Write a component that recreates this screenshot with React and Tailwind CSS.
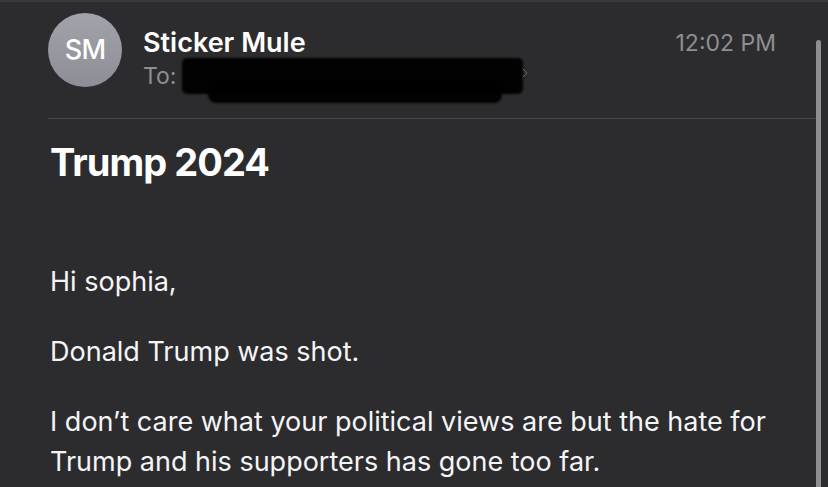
import { ChevronRight } from 'lucide-react'

const font = { fontFamily: 'Inter, "Noto Sans", sans-serif' }

function Redaction() {
  return (
    <div className="absolute left-[39px] top-[-4px] h-[46px] w-[345px]">
      <span className="absolute left-[5px] top-[6px] text-[23px] leading-[28px] text-[#4a4a4c]">k</span>
      <div className="absolute left-0 top-0 h-[36px] w-[341px] rounded-[5px] bg-black/95 blur-[1px]" />
      <div className="absolute left-[26px] top-[22px] h-[23px] w-[294px] rounded-b-[8px] rounded-tr-[4px] bg-black/95 blur-[1px]" />
      <ChevronRight className="absolute right-[-6px] top-[6px] h-[18px] w-[16px] text-[#6e6e73]" strokeWidth={1.3} />
    </div>
  )
}

export default function App() {
  return (
    <div className="flex h-[487px] w-[828px] overflow-hidden border-t-2 border-[#3a3a3c] bg-[#2c2c2e] text-white" style={font}>
      <div className="flex-1 pl-[48px]">
        <div className="flex h-[105px] items-start pt-[11px]">
          <div className="flex h-[74px] w-[74px] items-center justify-center rounded-full bg-gradient-to-b from-[#a1a2aa] to-[#8d8e96] text-[27px] font-medium tracking-tight">
            SM
          </div>
          <div className="ml-[21px] flex-1 pt-[14px]">
            <div className="flex items-start justify-between">
              <div className="text-[27px] font-semibold leading-[32px]">Sticker Mule</div>
              <div className="pr-[40px] text-[23px] leading-[32px] text-[#8e8e93]">12:02 PM</div>
            </div>
            <div className="relative mt-[3px] text-[23px] leading-[28px] text-[#8e8e93]">
              <span>To:</span>
              <Redaction />
            </div>
          </div>
        </div>
        <div className="mt-[11px] h-px bg-[#48484a]" />
        <div className="pl-[2px]">
          <h1 className="mt-[20px] text-[38px] font-bold leading-[46px] tracking-tight">Trump 2024</h1>
          <div className="mt-[77px] space-y-[30px] text-[27px] leading-[40px] text-[#f5f5f7]">
            <p>Hi sophia,</p>
            <p>Donald Trump was shot.</p>
            <p className="w-[740px]">I don’t care what your political views are but the hate for Trump and his supporters has gone too far.</p>
          </div>
        </div>
      </div>
      <div className="w-[12px] pt-[38px]">
        <div className="h-full w-[5px] rounded-t-full bg-[#8e8e93]" />
      </div>
    </div>
  )
}
